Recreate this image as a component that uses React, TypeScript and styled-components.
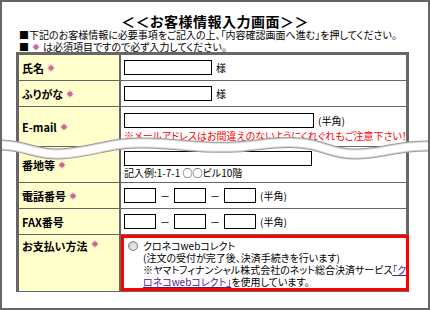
import styled, { createGlobalStyle } from 'styled-components';

const GlobalStyle = createGlobalStyle`
    html, body {
        margin: 0;
        padding: 0;
        background: #fff;
    }
    body {
        font-family: 'Noto Sans CJK JP', 'Noto Sans', sans-serif;
        font-feature-settings: 'palt';
        color: #000;
    }
`;

const Frame = styled.div`
    position: relative;
    box-sizing: border-box;
    width: 430px;
    height: 310px;
    border: 2px solid #666;
    padding: 11px 0 0 14px;
    overflow: hidden;
`;

const Title = styled.h1`
    margin: 0;
    padding-right: 14px;
    font-size: 14px;
    line-height: 16px;
    font-weight: bold;
    text-align: center;
    letter-spacing: 0.5px;
`;

const Note = styled.p<{ $tight?: boolean }>`
    margin: 0;
    padding-left: 3px;
    font-size: 10px;
    line-height: ${(p) => (p.$tight ? '11px' : '12px')};
    white-space: nowrap;
    display: flex;
    align-items: center;
    gap: 3px;
`;

const FormTable = styled.div`
    box-sizing: border-box;
    width: 393px;
    border: 3px solid #666;
`;

const Row = styled.div<{ $h: number; $last?: boolean }>`
    box-sizing: border-box;
    display: grid;
    grid-template-columns: 102px 1fr;
    height: ${(p) => p.$h}px;
    border-bottom: ${(p) => (p.$last ? 'none' : '1px solid #666')};
`;

const Label = styled.div<{ $top?: boolean }>`
    box-sizing: border-box;
    background: #ffffcc;
    border-right: 2px solid #666;
    padding: ${(p) => (p.$top ? '5px 0 0 3px' : '0 0 0 3px')};
    display: flex;
    align-items: ${(p) => (p.$top ? 'flex-start' : 'center')};
    gap: 3px;
    font-size: 11px;
    line-height: 12px;
    font-weight: bold;
    white-space: nowrap;
`;

const Value = styled.div`
    box-sizing: border-box;
    padding-left: 3px;
    display: flex;
    flex-direction: column;
    justify-content: center;
    font-size: 10px;
    line-height: 11px;
    white-space: nowrap;
`;

const Line = styled.div`
    display: flex;
    align-items: center;
    gap: 4px;
`;

const Box = styled.span<{ $w: number }>`
    box-sizing: border-box;
    display: inline-block;
    width: ${(p) => p.$w}px;
    height: 15px;
    border: 1px solid #000;
    background: #fff;
`;

const Dash = styled.span`
    width: 10px;
    text-align: center;
`;

const Warning = styled.div`
    color: #ff0000;
    margin-top: 2px;
    line-height: 11px;
`;

const Example = styled.div`
    margin-top: 1px;
    line-height: 11px;
`;

const PayCell = styled.div`
    box-sizing: border-box;
    border: 3px solid #ff0000;
    padding: 2px 0 0 4px;
    display: flex;
    gap: 5px;
    font-size: 10px;
    line-height: 12px;
    white-space: nowrap;
`;

const Radio = styled.span`
    box-sizing: border-box;
    flex: none;
    width: 10px;
    height: 10px;
    margin-top: 1px;
    border-radius: 50%;
    border: 1px solid #808080;
    background: radial-gradient(circle at 60% 60%, #e4e2dc 0 40%, #c8c6c0 70%);
`;

const PayText = styled.div`
    display: flex;
    flex-direction: column;
`;

const Kuroneko = styled.a`
    color: #551a8b;
    text-decoration: underline;
`;

const Wave = styled.svg`
    position: absolute;
    left: -2px;
    top: 128px;
    pointer-events: none;
`;

const Star = () => (
    <svg width='8' height='8' viewBox='0 0 8 8'>
        <polygon
            fill='#cc6699'
            points='4,0 4.9,2.3 6.8,1.2 5.7,3.1 8,4 5.7,4.9 6.8,6.8 4.9,5.7 4,8 3.1,5.7 1.2,6.8 2.3,4.9 0,4 2.3,3.1 1.2,1.2 3.1,2.3'
        />
    </svg>
);

const wavePath = 'M0,15 C25,15 35,25 60,24 C95,22 110,12 145,13 C185,14 200,19 235,17 C265,15 275,11 300,13 C325,15 330,24 355,24 C385,24 395,15 432,16';

const App = () => {
    return (
        <>
            <GlobalStyle />
            <Frame>
                <Title>＜＜お客様情報入力画面＞＞</Title>
                <Note>■下記のお客様情報に必要事項をご記入の上、「内容確認画面へ進む」を押してください。</Note>
                <Note $tight>
                    ■<Star />は必須項目ですので必ず入力してください。
                </Note>
                <FormTable>
                    <Row $h={26}>
                        <Label>
                            氏名<Star />
                        </Label>
                        <Value>
                            <Line>
                                <Box $w={88} />様
                            </Line>
                        </Value>
                    </Row>
                    <Row $h={26}>
                        <Label>
                            ふりがな<Star />
                        </Label>
                        <Value>
                            <Line>
                                <Box $w={88} />様
                            </Line>
                        </Value>
                    </Row>
                    <Row $h={40}>
                        <Label>
                            E-mail<Star />
                        </Label>
                        <Value>
                            <Line>
                                <Box $w={190} />(半角)
                            </Line>
                            <Warning>※メールアドレスはお間違えのないようにくれぐれもご注意下さい！</Warning>
                        </Value>
                    </Row>
                    <Row $h={36}>
                        <Label>
                            番地等<Star />
                        </Label>
                        <Value>
                            <Line>
                                <Box $w={188} />
                            </Line>
                            <Example>記入例:1-7-1 ○○ビル10階</Example>
                        </Value>
                    </Row>
                    <Row $h={26}>
                        <Label>
                            電話番号<Star />
                        </Label>
                        <Value>
                            <Line>
                                <Box $w={32} />
                                <Dash>－</Dash>
                                <Box $w={32} />
                                <Dash>－</Dash>
                                <Box $w={32} />
                                (半角)
                            </Line>
                        </Value>
                    </Row>
                    <Row $h={26}>
                        <Label>FAX番号</Label>
                        <Value>
                            <Line>
                                <Box $w={32} />
                                <Dash>－</Dash>
                                <Box $w={32} />
                                <Dash>－</Dash>
                                <Box $w={32} />
                                (半角)
                            </Line>
                        </Value>
                    </Row>
                    <Row $h={54} $last>
                        <Label $top>
                            お支払い方法<Star />
                        </Label>
                        <PayCell>
                            <Radio />
                            <PayText>
                                <span>クロネコwebコレクト</span>
                                <span>(注文の受付が完了後、決済手続きを行います)</span>
                                <span>
                                    ※ヤマトフィナンシャル株式会社のネット総合決済サービス<Kuroneko href='#'>「ク</Kuroneko>
                                </span>
                                <span>
                                    <Kuroneko href='#'>ロネコwebコレクト」</Kuroneko>を使用しています。
                                </span>
                            </PayText>
                        </PayCell>
                    </Row>
                </FormTable>
                <Wave width='434' height='40' viewBox='0 0 434 40'>
                    <path d={wavePath} fill='none' stroke='#9a9a9a' strokeWidth='11' />
                    <path d={wavePath} fill='none' stroke='#d8d8d8' strokeWidth='9' />
                    <path d={wavePath} fill='none' stroke='#ffffff' strokeWidth='7' />
                </Wave>
            </Frame>
        </>
    );
};

export default App;
